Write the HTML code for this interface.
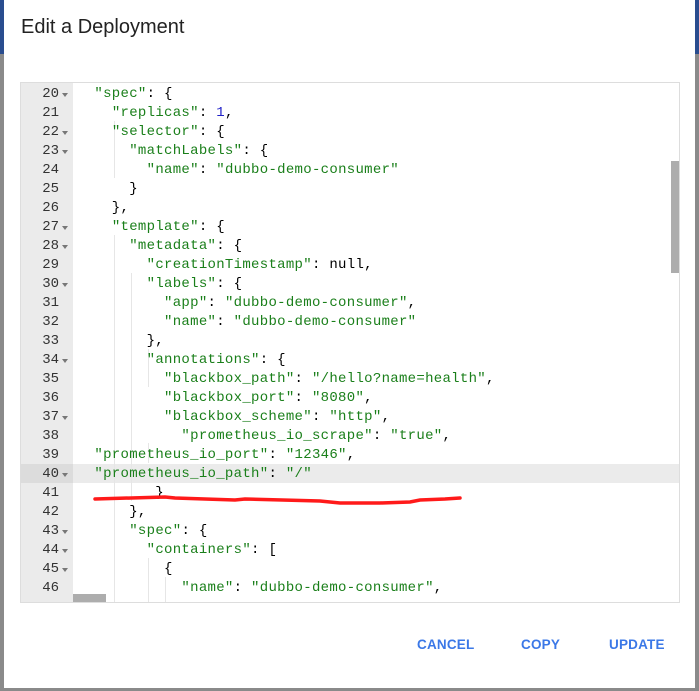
<!DOCTYPE html>
<html><head><meta charset="utf-8"><style>
*{margin:0;padding:0;box-sizing:border-box}
body{width:699px;height:691px;background:#fff;position:relative;overflow:hidden;font-family:"Liberation Sans",sans-serif}
.ls{position:absolute;left:0;top:0;width:4px;height:691px;background:#8a8a8a}
.ls:before{content:"";position:absolute;left:0;top:0;width:4px;height:54px;background:#2a4d8f}
.rs{position:absolute;right:0;top:0;width:4px;height:691px;background:#8a8a8a}
.rs:before{content:"";position:absolute;left:0;top:0;width:4px;height:54px;background:#2a4d8f}
.bs{position:absolute;left:0;bottom:0;width:699px;height:3px;background:#8a8a8a}
h1{position:absolute;left:21px;top:16px;font-size:20px;font-weight:normal;color:#222}
.ed{position:absolute;left:20px;top:82px;width:660px;height:521px;border:1px solid #ddd;overflow:hidden;background:#fff}
.gut{position:absolute;left:0;top:0;width:52px;height:100%;background:#ebebeb}
.ln{position:absolute;left:0;width:52px;height:19px;font:14px/19px "Liberation Mono",monospace;color:#333;text-align:right;padding-right:14px}
.ln.f:after{content:"";position:absolute;right:5px;top:8px;border-left:3px solid transparent;border-right:3px solid transparent;border-top:4px solid #777}
.cl{position:absolute;left:56px;height:19px;font:14px/19px "Liberation Mono",monospace;color:#000;white-space:pre;letter-spacing:0.3px}
.s{color:#1a7f1a}.n{color:#2020c8}
.hl{position:absolute;left:52px;top:381px;width:608px;height:19px;background:#ebebeb}
.hg{position:absolute;left:0;top:381px;width:52px;height:19px;background:#dcdcdc}
.vs{position:absolute;left:650px;top:78px;width:9px;height:112px;background:#adadad}
.hs{position:absolute;left:52px;top:511px;width:33px;height:9px;background:#adadad}
.ig{position:absolute;width:1px;background:#e6e6e6}
.btn{position:absolute;top:637px;font-size:13.5px;font-weight:bold;color:#3b78e7;letter-spacing:0.2px}
</style></head><body>
<div class="ls"></div><div class="rs"></div><div class="bs"></div>
<h1>Edit a Deployment</h1>
<div class="ed">
<div class="gut"></div>
<div class="hg"></div><div class="hl"></div>
<div class="ig" style="left:93px;top:38px;height:57px"></div>
<div class="ig" style="left:93px;top:152px;height:368px"></div>
<div class="ig" style="left:110px;top:190px;height:228px"></div>
<div class="ig" style="left:127px;top:266px;height:38px"></div>
<div class="ig" style="left:127px;top:360px;height:20px"></div>
<div class="ig" style="left:127px;top:475px;height:45px"></div>
<div class="ig" style="left:144px;top:494px;height:26px"></div>
<div class="vs"></div><div class="hs"></div>
<div class="ln f" style="top:2px">20</div><div class="cl" style="top:2px">  <span class="s">"spec"</span>: {</div>
<div class="ln" style="top:21px">21</div><div class="cl" style="top:21px">    <span class="s">"replicas"</span>: <span class="n">1</span>,</div>
<div class="ln f" style="top:40px">22</div><div class="cl" style="top:40px">    <span class="s">"selector"</span>: {</div>
<div class="ln f" style="top:59px">23</div><div class="cl" style="top:59px">      <span class="s">"matchLabels"</span>: {</div>
<div class="ln" style="top:78px">24</div><div class="cl" style="top:78px">        <span class="s">"name"</span>: <span class="s">"dubbo-demo-consumer"</span></div>
<div class="ln" style="top:97px">25</div><div class="cl" style="top:97px">      }</div>
<div class="ln" style="top:116px">26</div><div class="cl" style="top:116px">    },</div>
<div class="ln f" style="top:135px">27</div><div class="cl" style="top:135px">    <span class="s">"template"</span>: {</div>
<div class="ln f" style="top:154px">28</div><div class="cl" style="top:154px">      <span class="s">"metadata"</span>: {</div>
<div class="ln" style="top:173px">29</div><div class="cl" style="top:173px">        <span class="s">"creationTimestamp"</span>: null,</div>
<div class="ln f" style="top:192px">30</div><div class="cl" style="top:192px">        <span class="s">"labels"</span>: {</div>
<div class="ln" style="top:211px">31</div><div class="cl" style="top:211px">          <span class="s">"app"</span>: <span class="s">"dubbo-demo-consumer"</span>,</div>
<div class="ln" style="top:230px">32</div><div class="cl" style="top:230px">          <span class="s">"name"</span>: <span class="s">"dubbo-demo-consumer"</span></div>
<div class="ln" style="top:249px">33</div><div class="cl" style="top:249px">        },</div>
<div class="ln f" style="top:268px">34</div><div class="cl" style="top:268px">        <span class="s">"annotations"</span>: {</div>
<div class="ln" style="top:287px">35</div><div class="cl" style="top:287px">          <span class="s">"blackbox_path"</span>: <span class="s">"/hello?name=health"</span>,</div>
<div class="ln" style="top:306px">36</div><div class="cl" style="top:306px">          <span class="s">"blackbox_port"</span>: <span class="s">"8080"</span>,</div>
<div class="ln f" style="top:325px">37</div><div class="cl" style="top:325px">          <span class="s">"blackbox_scheme"</span>: <span class="s">"http"</span>,</div>
<div class="ln" style="top:344px">38</div><div class="cl" style="top:344px">            <span class="s">"prometheus_io_scrape"</span>: <span class="s">"true"</span>,</div>
<div class="ln" style="top:363px">39</div><div class="cl" style="top:363px">  <span class="s">"prometheus_io_port"</span>: <span class="s">"12346"</span>,</div>
<div class="ln f" style="top:382px">40</div><div class="cl" style="top:382px">  <span class="s">"prometheus_io_path"</span>: <span class="s">"/"</span></div>
<div class="ln" style="top:401px">41</div><div class="cl" style="top:401px">         }</div>
<div class="ln" style="top:420px">42</div><div class="cl" style="top:420px">      },</div>
<div class="ln f" style="top:439px">43</div><div class="cl" style="top:439px">      <span class="s">"spec"</span>: {</div>
<div class="ln f" style="top:458px">44</div><div class="cl" style="top:458px">        <span class="s">"containers"</span>: [</div>
<div class="ln f" style="top:477px">45</div><div class="cl" style="top:477px">          {</div>
<div class="ln" style="top:496px">46</div><div class="cl" style="top:496px">            <span class="s">"name"</span>: <span class="s">"dubbo-demo-consumer"</span>,</div>
</div>
<svg style="position:absolute;left:0;top:0" width="699" height="691"><path d="M95 499 L165 497 L175 498 L235 500 L245 499 L320 501 L340 503 L380 503 L410 502 L420 500 L445 499 L460 498" stroke="#ff1a1a" stroke-width="3.5" fill="none" stroke-linecap="round"/></svg>
<div class="btn" style="left:417px">CANCEL</div>
<div class="btn" style="left:521px">COPY</div>
<div class="btn" style="left:609px">UPDATE</div>
</body></html>
